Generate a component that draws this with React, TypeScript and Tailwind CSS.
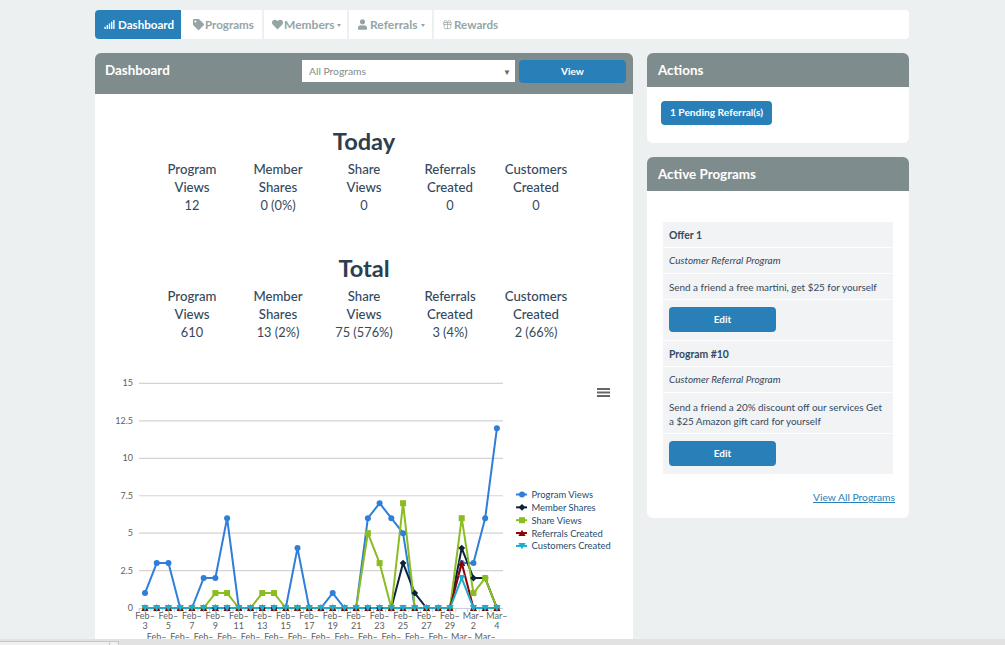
import { FaSignal, FaTag, FaHeart, FaUser } from 'react-icons/fa';
import { Gift } from 'lucide-react';

const program = [1, 3, 3, 0, 0, 2, 2, 6, 0, 0, 0, 0, 0, 4, 0, 0, 1, 0, 0, 6, 7, 6, 5, 0, 0, 0, 0, 3, 3, 6, 12];
const member = [0, 0, 0, 0, 0, 0, 0, 0, 0, 0, 0, 0, 0, 0, 0, 0, 0, 0, 0, 0, 0, 0, 3, 1, 0, 0, 0, 4, 2, 2, 0];
const share = [0, 0, 0, 0, 0, 0, 1, 1, 0, 0, 1, 1, 0, 0, 0, 0, 0, 0, 0, 5, 3, 0, 7, 0, 0, 0, 0, 6, 1, 2, 0];
const referrals = [0, 0, 0, 0, 0, 0, 0, 0, 0, 0, 0, 0, 0, 0, 0, 0, 0, 0, 0, 0, 0, 0, 0, 0, 0, 0, 0, 3, 0, 0, 0];
const customers = [0, 0, 0, 0, 0, 0, 0, 0, 0, 0, 0, 0, 0, 0, 0, 0, 0, 0, 0, 0, 0, 0, 0, 0, 0, 0, 0, 2, 0, 0, 0];

const days = [
  ...Array.from({ length: 27 }, (_, i) => ['Feb–', String(i + 3)]),
  ...Array.from({ length: 4 }, (_, i) => ['Mar–', String(i + 1)]),
];

// chart coordinates are relative to the card, which starts at x=95 y=94
const px = (i: number) => 50 + i * 11.73;
const py = (v: number) => 514 - v * 14.97;
const line = (data: number[]) => data.map((v, i) => `${px(i)},${py(v)}`).join(' ');

const Circle = ({ x, y, c }: { x: number; y: number; c: string }) => <circle cx={x} cy={y} r={3} fill={c} />;
const Diamond = ({ x, y, c }: { x: number; y: number; c: string }) => (
  <path d={`M${x} ${y - 3.4}L${x + 3.4} ${y}L${x} ${y + 3.4}L${x - 3.4} ${y}Z`} fill={c} />
);
const Square = ({ x, y, c }: { x: number; y: number; c: string }) => <rect x={x - 3} y={y - 3} width={6} height={6} fill={c} />;
const Up = ({ x, y, c }: { x: number; y: number; c: string }) => (
  <path d={`M${x} ${y - 3.4}L${x + 3.6} ${y + 3}L${x - 3.6} ${y + 3}Z`} fill={c} />
);
const Down = ({ x, y, c }: { x: number; y: number; c: string }) => (
  <path d={`M${x - 3.6} ${y - 3}L${x + 3.6} ${y - 3}L${x} ${y + 3.4}Z`} fill={c} />
);

const series = [
  { name: 'Program Views', data: program, color: '#2f7ed8', Marker: Circle },
  { name: 'Member Shares', data: member, color: '#0d233a', Marker: Diamond },
  { name: 'Share Views', data: share, color: '#8bbc21', Marker: Square },
  { name: 'Referrals Created', data: referrals, color: '#910000', Marker: Up },
  { name: 'Customers Created', data: customers, color: '#1aadce', Marker: Down },
];

const Chart = () => (
  <svg width="538" height="280" viewBox="0 270 538 280" className="mt-[23px] block font-['Lato',sans-serif]">
    {[0, 2.5, 5, 7.5, 10, 12.5, 15].map((v) => (
      <g key={v}>
        {v > 0 && <line x1="44" x2="408" y1={py(v)} y2={py(v)} stroke="#d4d4d4" strokeWidth="1.2" />}
        <text x="38" y={py(v) + 3} textAnchor="end" fontSize="9" fill="#606060">
          {v}
        </text>
      </g>
    ))}
    <line x1="44" x2="408" y1="514.5" y2="514.5" stroke="#c0d0e0" strokeWidth="1" />
    {days.map((_, i) => (
      <line key={i} x1={px(i) - 5.87} x2={px(i) - 5.87} y1="514" y2="518" stroke="#c0d0e0" strokeWidth="1" />
    ))}
    {days.map((d, i) =>
      i % 2 === 0 ? (
        <text key={i} textAnchor="middle" fontSize="9" fill="#606060">
          <tspan x={px(i)} y="525">{d[0]}</tspan>
          <tspan x={px(i)} y="535">{d[1]}</tspan>
        </text>
      ) : (
        <text key={i} x={px(i)} y="546" textAnchor="middle" fontSize="9" fill="#606060">
          {d[0]}
        </text>
      ),
    )}
    {series.map((s) => (
      <polyline key={s.name} points={line(s.data)} fill="none" stroke={s.color} strokeWidth="2" strokeLinejoin="round" />
    ))}
    {series.map((s) => (
      <g key={s.name}>
        {s.data.map((v, i) => (
          <s.Marker key={i} x={px(i)} y={py(v)} c={s.color} />
        ))}
      </g>
    ))}
    {series.map((s, i) => {
      const y = 400.5 + i * 12.85;
      return (
        <g key={s.name}>
          <line x1="421" x2="432" y1={y} y2={y} stroke={s.color} strokeWidth="2" />
          <s.Marker x={427} y={y} c={s.color} />
          <text x="436.5" y={y + 3.5} fontSize="9.4" fill="#274b6d">
            {s.name}
          </text>
        </g>
      );
    })}
    <g stroke="#666" strokeWidth="2">
      <line x1="502" x2="515" y1="295" y2="295" />
      <line x1="502" x2="515" y1="298.5" y2="298.5" />
      <line x1="502" x2="515" y1="302" y2="302" />
    </g>
  </svg>
);

const Stats = ({ title, values, className }: { title: string; values: string[]; className: string }) => {
  const labels = [
    ['Program', 'Views'],
    ['Member', 'Shares'],
    ['Share', 'Views'],
    ['Referrals', 'Created'],
    ['Customers', 'Created'],
  ];
  return (
    <div className={className}>
      <h2 className="text-center text-[23.6px] leading-[25px] font-bold text-[#2c3e50]">{title}</h2>
      <div className="mt-[6px] mx-[54px] grid grid-cols-5 text-center text-[13.2px] leading-[18px] font-medium text-[#34495e]">
        {labels.map((l, i) => (
          <div key={l[0]} className="px-1">
            <div>{l[0]}</div>
            <div>{l[1]}</div>
            <div className="text-[12.8px] font-normal">{values[i]}</div>
          </div>
        ))}
      </div>
    </div>
  );
};

const NavItem = ({ icon, label, caret, className }: { icon: React.ReactNode; label: string; caret?: boolean; className: string }) => (
  <div className={`flex h-full items-center font-bold text-[#95a5a6] ${className}`}>
    {icon}
    <span>{label}</span>
    {caret && <span className="ml-[1px] mt-[1px] border-x-[2.5px] border-t-[3px] border-x-transparent border-t-[#95a5a6]" />}
  </div>
);

const PanelHead = ({ title }: { title: string }) => (
  <div className="flex h-[34px] items-center rounded-t-md bg-[#7f8c8d] px-[11px] text-[13.4px] font-bold text-white">{title}</div>
);

const Row = ({ children, className = '' }: { children: React.ReactNode; className?: string }) => (
  <div className={`border-b border-white px-[6px] text-[#34495e] last:border-b-0 ${className}`}>{children}</div>
);

const EditButton = () => (
  <button className="block h-[25px] w-[107px] rounded bg-[#2980b9] text-[10px] font-bold text-white">Edit</button>
);

export default function App() {
  return (
    <div className="flex h-[645px] w-[1005px] flex-col overflow-hidden bg-[#ecf0f1] font-['Lato',sans-serif]">
      <div className="h-[639px] overflow-hidden px-[95px] pt-[10px]">
        <div className="w-[814px]">
          <nav className="flex h-[29px] items-center rounded bg-white">
            <div className="flex h-full w-[86px] items-center gap-[3px] rounded-l bg-[#2980b9] pl-[9px] text-[11.6px] font-bold text-white">
              <FaSignal className="h-[11px] w-[11px]" />
              <span>Dashboard</span>
            </div>
            <NavItem
              className="ml-[1px] w-[82px] gap-[1px] border-r-2 border-[#ecf0f1] pl-[11px] text-[11.6px]"
              icon={<FaTag className="h-[11px] w-[11px]" />}
              label="Programs"
            />
            <NavItem
              className="w-[85px] gap-[1px] border-r-2 border-[#ecf0f1] pl-[8px] text-[12px]"
              icon={<FaHeart className="h-[11px] w-[11px]" />}
              label="Members"
              caret
            />
            <NavItem
              className="w-[85px] gap-[3px] border-r-2 border-[#ecf0f1] pl-[9px] text-[12px]"
              icon={<FaUser className="h-[11px] w-[9px]" />}
              label="Referrals"
              caret
            />
            <NavItem
              className="gap-[1px] pl-[8px] text-[11.6px]"
              icon={<Gift className="h-[11px] w-[11px]" strokeWidth={1.5} />}
              label="Rewards"
            />
          </nav>

          <div className="mt-[14px] flex items-start gap-[14px]">
            <div className="w-[538px]">
              <div className="flex h-[41px] items-start rounded-t-md bg-[#7f8c8d] pl-[10px] pr-[7px] pt-[7px]">
                <h1 className="w-[197px] text-[13.4px] leading-[20px] font-bold text-white">Dashboard</h1>
                <div className="flex h-[22px] w-[213px] items-center justify-between bg-white pl-[7px] pr-[4px] pt-[1px] text-[10.3px] text-[#7f8c8d]">
                  <span>All Programs</span>
                  <span className="text-[8px] text-[#666]">▼</span>
                </div>
                <button className="ml-[4px] block h-[23px] w-[107px] rounded-sm bg-[#2980b9] text-[10px] font-bold text-white">View</button>
              </div>
              <div className="h-[546px] overflow-hidden bg-white">
                <Stats title="Today" values={['12', '0 (0%)', '0', '0', '0']} className="pt-[35px]" />
                <Stats title="Total" values={['610', '13 (2%)', '75 (576%)', '3 (4%)', '2 (66%)']} className="pt-[42px]" />
                <Chart />
              </div>
            </div>

            <div className="flex w-[262px] flex-col gap-[14px]">
              <section className="rounded-md bg-white">
                <PanelHead title="Actions" />
                <div className="px-[14px] pt-[14px] pb-[18px]">
                  <button className="block h-[24px] w-[111px] rounded bg-[#2980b9] text-[10.2px] font-bold text-white">1 Pending Referral(s)</button>
                </div>
              </section>

              <section className="rounded-md bg-white">
                <PanelHead title="Active Programs" />
                <div className="px-[16px] pt-[31px] pb-[14px]">
                  <div className="bg-[#f1f3f5] leading-[13px]">
                    <Row className="pt-[7px] pb-[5px] text-[10.4px] font-bold">Offer 1</Row>
                    <Row className="pt-[6px] pb-[6px] text-[10px] italic">Customer Referral Program</Row>
                    <Row className="pt-[7px] pb-[5px] text-[9.9px]">Send a friend a free martini, get $25 for yourself</Row>
                    <Row className="pt-[7px] pb-[8px]"><EditButton /></Row>
                    <Row className="pt-[7px] pb-[5px] text-[10.4px] font-bold">Program #10</Row>
                    <Row className="pt-[6px] pb-[6px] text-[10px] italic">Customer Referral Program</Row>
                    <Row className="pt-[7px] pb-[5px] text-[9.9px] leading-[14px]">Send a friend a 20% discount off our services Get a $25 Amazon gift card for yourself</Row>
                    <Row className="pt-[7px] pb-[8px]"><EditButton /></Row>
                  </div>
                  <div className="-mr-[2px] mt-[16px] text-right text-[10.3px] leading-[14px] text-[#2980b9] underline">View All Programs</div>
                </div>
              </section>
            </div>
          </div>
        </div>
      </div>
      <div className="flex h-[6px] bg-[#e2e2e2] pt-[2px]">
        <div className="h-full w-[110px] border-t border-r border-[#c8c8c8] bg-[#f0f0f0]" />
        <div className="h-full w-[9px] border-t border-r border-[#c8c8c8] bg-[#f0f0f0]" />
      </div>
    </div>
  );
}
